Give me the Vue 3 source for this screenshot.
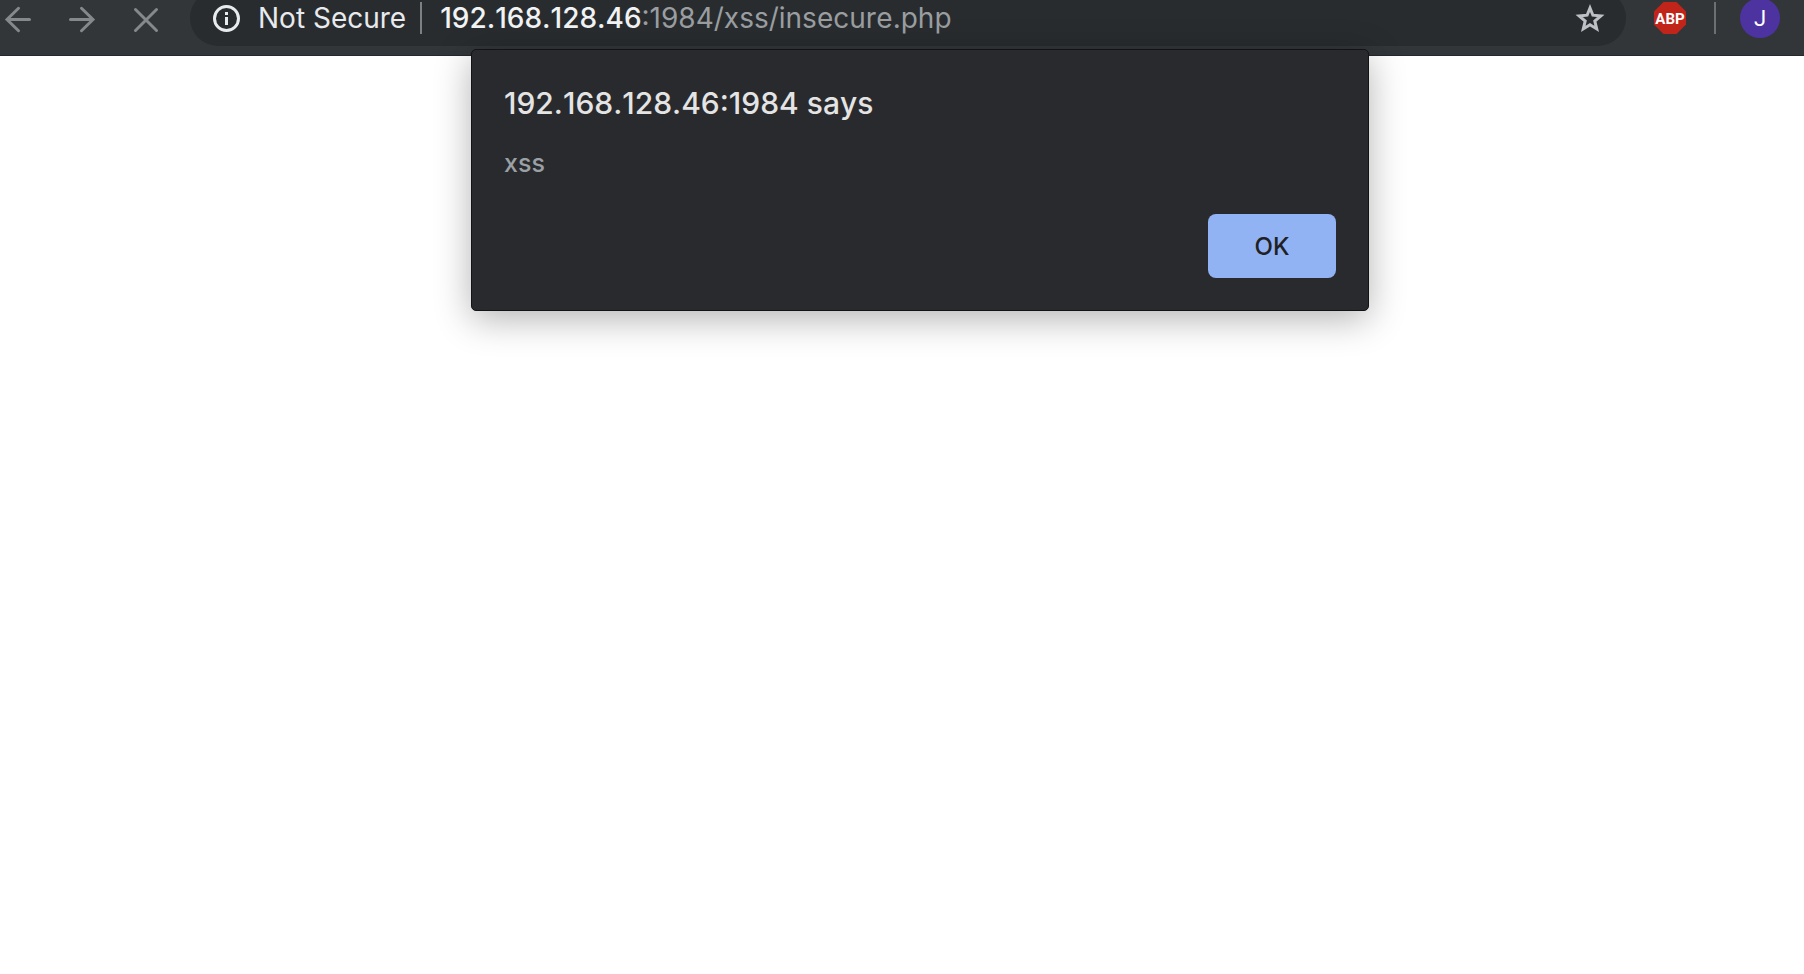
<script setup>
const host = '192.168.128.46'
const port = ':1984'
const path = '/xss/insecure.php'
</script>

<template>
  <div class="browser">
    <header class="toolbar">
      <nav class="nav">
        <button class="tool" type="button" aria-label="Back">
          <svg viewBox="0 0 32 32"><path d="M27.500 17.500H5M16.500 6.300L5 17.500L16.500 28.700" /></svg>
        </button>
        <button class="tool" type="button" aria-label="Forward">
          <svg viewBox="0 0 32 32"><path d="M4.500 17.500H27M15.500 6.300L27 17.500L15.500 28.700" /></svg>
        </button>
        <button class="tool" type="button" aria-label="Stop loading">
          <svg viewBox="0 0 32 32"><path d="M5.500 7.500L26.500 28.500M26.500 7.500L5.500 28.500" /></svg>
        </button>
      </nav>

      <div class="omnibox">
        <button class="security" type="button">
          <svg class="info" viewBox="0 0 28 28">
            <circle cx="13.500" cy="14.500" r="12" />
            <path d="M12 8H15V11H12ZM12 13H15V21H12Z" />
          </svg>
          <span>Not Secure</span>
        </button>
        <span class="rule"></span>
        <div class="url"><span class="host">{{ host }}</span><span>{{ port }}{{ path }}</span></div>
        <button class="bookmark" type="button" aria-label="Bookmark this page">
          <svg viewBox="0 0 32 32">
            <path d="M16 6L18.900 13.200L26.800 13.900L20.800 19L22.700 26.900L16 22.700L9.300 26.900L11.200 19L5.200 13.900L13.100 13.200Z" />
          </svg>
        </button>
      </div>

      <button class="abp" type="button" aria-label="Adblock Plus">
        <svg viewBox="0 0 32 32">
          <path d="M9.500 0H22.500L32 9.500V22.500L22.500 32H9.500L0 22.500V9.500Z" />
          <text x="16" y="22" text-anchor="middle">ABP</text>
        </svg>
      </button>
      <span class="rule divider"></span>
      <button class="avatar" type="button" aria-label="Profile">J</button>
    </header>

    <section class="dialog" role="alertdialog" aria-labelledby="dialog-title" aria-describedby="dialog-text">
      <h1 id="dialog-title">{{ host }}{{ port }} says</h1>
      <p id="dialog-text">xss</p>
      <button class="ok" type="button">OK</button>
    </section>
  </div>
</template>

<style>
body {
  margin: 0;
  background: #fff;
}
</style>

<style scoped>
.browser {
  position: relative;
  display: flex;
  flex-direction: column;
  min-height: 100vh;
  overflow: hidden;
  font-family: Inter, "Liberation Sans", sans-serif;
}

button {
  display: flex;
  align-items: center;
  justify-content: center;
  padding: 0;
  border: 0;
  background: none;
  color: inherit;
  font: inherit;
}

svg {
  display: block;
  width: 32px;
  height: 32px;
}

.toolbar {
  display: flex;
  align-items: center;
  margin-top: -10px;
  padding: 0 24px 9px 2px;
  border-bottom: 1px solid #25282b;
  background: #323639;
}

.nav {
  display: flex;
  gap: 32px;
  margin-right: 28px;
}

.tool path {
  fill: none;
  stroke: #85898b;
  stroke-width: 3;
  stroke-linecap: round;
}

.omnibox {
  display: flex;
  flex: 1;
  align-items: center;
  box-sizing: border-box;
  height: 56px;
  padding: 0 20px 0 23px;
  border-radius: 28px;
  background: #282c2f;
  color: #e8eaed;
  font-size: 28px;
  line-height: 36px;
  white-space: nowrap;
}

.security {
  gap: 17px;
}

.info {
  width: 28px;
  height: 28px;
}

.info circle {
  fill: none;
  stroke: #e8eaed;
  stroke-width: 3;
}

.info path {
  fill: #e8eaed;
}

.rule {
  width: 2px;
  height: 32px;
  margin: 0 18px 0 14px;
  background: #7c8083;
}

.url {
  flex: 1;
  color: #9a9ea1;
}

.host {
  color: #f1f3f4;
  font-weight: 500;
}

.url,
h1 {
  font-kerning: none;
}

.bookmark path {
  fill: none;
  stroke: #bdc1c6;
  stroke-width: 3;
}

.abp {
  margin-left: 28px;
}

.abp path {
  fill: #c1251a;
}

.abp text {
  fill: #fff;
  font-family: Roboto, sans-serif;
  font-size: 15px;
  font-weight: 700;
}

.divider {
  margin: 0 24px 0 28px;
  background: #6c7073;
}

.avatar {
  width: 40px;
  height: 40px;
  border-radius: 50%;
  background: #4c33a0;
  color: #fff;
  font-family: Roboto, sans-serif;
  font-size: 22px;
}

.dialog {
  position: absolute;
  top: 49px;
  left: calc(50% - 431px);
  display: flex;
  flex-direction: column;
  box-sizing: border-box;
  width: 898px;
  max-width: 100%;
  padding: 33px 32px 32px;
  border: 1px solid #121315;
  border-radius: 5px;
  background: #292a2d;
  box-shadow: 0 8px 36px rgba(0, 0, 0, 0.3);
}

h1 {
  margin: 0;
  color: #e4e4e4;
  font-size: 30px;
  font-weight: 500;
  line-height: 40px;
}

p {
  margin: 24px 0 35px;
  color: #9aa0a6;
  font-size: 25px;
  font-weight: 500;
  line-height: 32px;
}

.ok {
  align-self: flex-end;
  width: 128px;
  height: 64px;
  border-radius: 8px;
  background: #92b3f3;
  color: #202124;
  font-size: 24px;
  font-weight: 500;
}
</style>
